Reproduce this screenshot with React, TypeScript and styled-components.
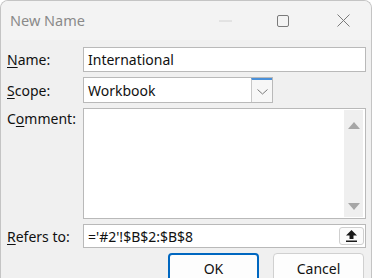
import {FC} from "react";
import styled, {createGlobalStyle} from "styled-components";

const GlobalStyle = createGlobalStyle`
    html, body {
        margin: 0;
        padding: 0;
        background: #ffffff;
        font-family: "Noto Sans", "Open Sans", sans-serif;
        overflow: hidden;
    }
`;

const Underlined: FC<{text: string; index: number}> = ({text, index}) => (
    <>
        {text.slice(0, index)}
        <U>{text[index]}</U>
        {text.slice(index + 1)}
    </>
);

export default function App() {
    return (
        <>
            <GlobalStyle />
            <Window>
                <TitleBar>
                    <Title>New Name</Title>
                    <Controls>
                        <CtrlButton>
                            <svg width="13" height="2" viewBox="0 0 13 2">
                                <line x1="0" y1="1" x2="13" y2="1" stroke="#d2d2d2" strokeWidth="1" />
                            </svg>
                        </CtrlButton>
                        <CtrlButton>
                            <svg width="12" height="12" viewBox="0 0 12 12">
                                <rect x="0.5" y="0.5" width="11" height="11" rx="1.5" fill="none" stroke="#7a7a7a" strokeWidth="1" />
                            </svg>
                        </CtrlButton>
                        <CtrlButton>
                            <svg width="13" height="13" viewBox="0 0 13 13">
                                <path d="M0.5 0.5 L12.5 12.5 M12.5 0.5 L0.5 12.5" stroke="#7a7a7a" strokeWidth="1" />
                            </svg>
                        </CtrlButton>
                    </Controls>
                </TitleBar>
                <Form>
                    <Label $h={25}>
                        <Underlined text="Name:" index={0} />
                    </Label>
                    <TextBox $h={25}>International</TextBox>

                    <Label $h={26}>
                        <Underlined text="Scope:" index={0} />
                    </Label>
                    <Select>
                        <SelectText>Workbook</SelectText>
                        <DropButton>
                            <svg width="11" height="6" viewBox="0 0 11 6">
                                <path d="M0.5 0.5 L5.5 5 L10.5 0.5" fill="none" stroke="#7a7a7a" strokeWidth="1" />
                            </svg>
                        </DropButton>
                    </Select>

                    <Label $h={22} $top>
                        <Underlined text="Comment:" index={1} />
                    </Label>
                    <CommentBox>
                        <ScrollTrack>
                            <svg width="12" height="7" viewBox="0 0 12 7">
                                <path d="M6 0 L12 7 L0 7 Z" fill="#a6a6a6" />
                            </svg>
                            <svg width="12" height="7" viewBox="0 0 12 7">
                                <path d="M0 0 L12 0 L6 7 Z" fill="#a6a6a6" />
                            </svg>
                        </ScrollTrack>
                    </CommentBox>

                    <Label $h={24}>
                        <Underlined text="Refers to:" index={0} />
                    </Label>
                    <TextBox $h={24}>
                        <RefText>='#2'!$B$2:$B$8</RefText>
                        <CollapseButton>
                            <svg width="11" height="12" viewBox="0 0 11 12">
                                <path d="M5.5 0 L11 5.5 L7.5 5.5 L7.5 9 L3.5 9 L3.5 5.5 L0 5.5 Z" fill="#1a1a1a" />
                                <rect x="0" y="10.5" width="11" height="1.5" fill="#1a1a1a" />
                            </svg>
                        </CollapseButton>
                    </TextBox>

                    <span />
                    <ButtonRow>
                        <DialogButton $primary>OK</DialogButton>
                        <DialogButton>Cancel</DialogButton>
                    </ButtonRow>
                </Form>
            </Window>
        </>
    );
}

const Window = styled.div`
    width: 372px;
    height: 278px;
    box-sizing: border-box;
    border: 1px solid #c4c4c4;
    border-bottom: none;
    border-radius: 8px 8px 0 0;
    background: #f0f0f0;
    overflow: hidden;
`;

const TitleBar = styled.div`
    height: 39px;
    display: flex;
    align-items: center;
    justify-content: space-between;
    background: #f3f3f3;
`;

const Title = styled.div`
    padding-left: 9px;
    font-size: 14.5px;
    color: #8a8a8a;
    margin-top: -1px;
`;

const Controls = styled.div`
    display: flex;
    align-items: center;
    height: 100%;
    padding-right: 21px;
`;

const CtrlButton = styled.div`
    width: 58px;
    height: 100%;
    display: flex;
    align-items: center;
    justify-content: center;
    &:last-child {
        width: 38px;
        justify-content: flex-end;
    }
`;

const Form = styled.div`
    display: grid;
    grid-template-columns: 76px 283px;
    row-gap: 5px;
    padding: 7px 0 0 6px;
`;

const Label = styled.div<{$h: number; $top?: boolean}>`
    height: ${(p) => p.$h}px;
    display: flex;
    align-items: ${(p) => (p.$top ? "flex-start" : "center")};
    padding-top: ${(p) => (p.$top ? "1px" : "0")};
    font-size: 14px;
    color: #111;
`;

const U = styled.span`
    text-decoration: underline;
    text-underline-offset: 2px;
`;

const TextBox = styled.div<{$h: number}>`
    height: ${(p) => p.$h}px;
    box-sizing: border-box;
    border: 1px solid #b9b9b9;
    background: #ffffff;
    display: flex;
    align-items: center;
    padding-left: 4px;
    font-size: 14px;
    color: #111;
`;

const RefText = styled.span`
    flex: 1;
`;

const CollapseButton = styled.div`
    width: 25px;
    height: 18px;
    margin-right: 1px;
    box-sizing: border-box;
    border: 1px solid #cfcfcf;
    border-radius: 3px;
    display: flex;
    align-items: center;
    justify-content: center;
    background: #fbfbfb;
`;

const Select = styled.div`
    width: 190px;
    height: 26px;
    box-sizing: border-box;
    border: 1px solid #b9b9b9;
    background: #ffffff;
    display: flex;
    align-items: stretch;
`;

const SelectText = styled.div`
    flex: 1;
    display: flex;
    align-items: center;
    padding-left: 4px;
    font-size: 14px;
    color: #111;
`;

const DropButton = styled.div`
    width: 21px;
    box-sizing: border-box;
    border-top: 2px solid #4a90d9;
    border-left: 1px solid #c8c8c8;
    background: #f7f7f7;
    display: flex;
    align-items: center;
    justify-content: center;
    padding-top: 1px;
`;

const CommentBox = styled.div`
    height: 111px;
    box-sizing: border-box;
    border: 1px solid #b9b9b9;
    background: #ffffff;
    display: flex;
    justify-content: flex-end;
    padding: 1px;
`;

const ScrollTrack = styled.div`
    width: 19px;
    background: #efefef;
    display: flex;
    flex-direction: column;
    align-items: center;
    justify-content: space-between;
    padding: 12px 0 7px;
    margin-right: 1px;
`;

const ButtonRow = styled.div`
    display: flex;
    justify-content: flex-end;
    gap: 14px;
    padding-right: 2px;
`;

const DialogButton = styled.div<{$primary?: boolean}>`
    width: 91px;
    height: 30px;
    box-sizing: border-box;
    border-radius: 4px;
    border: ${(p) => (p.$primary ? "2px solid #0067c0" : "1px solid #d0d0d0")};
    background: #fdfdfd;
    display: flex;
    align-items: center;
    justify-content: center;
    font-size: 14px;
    color: #111;
`;
